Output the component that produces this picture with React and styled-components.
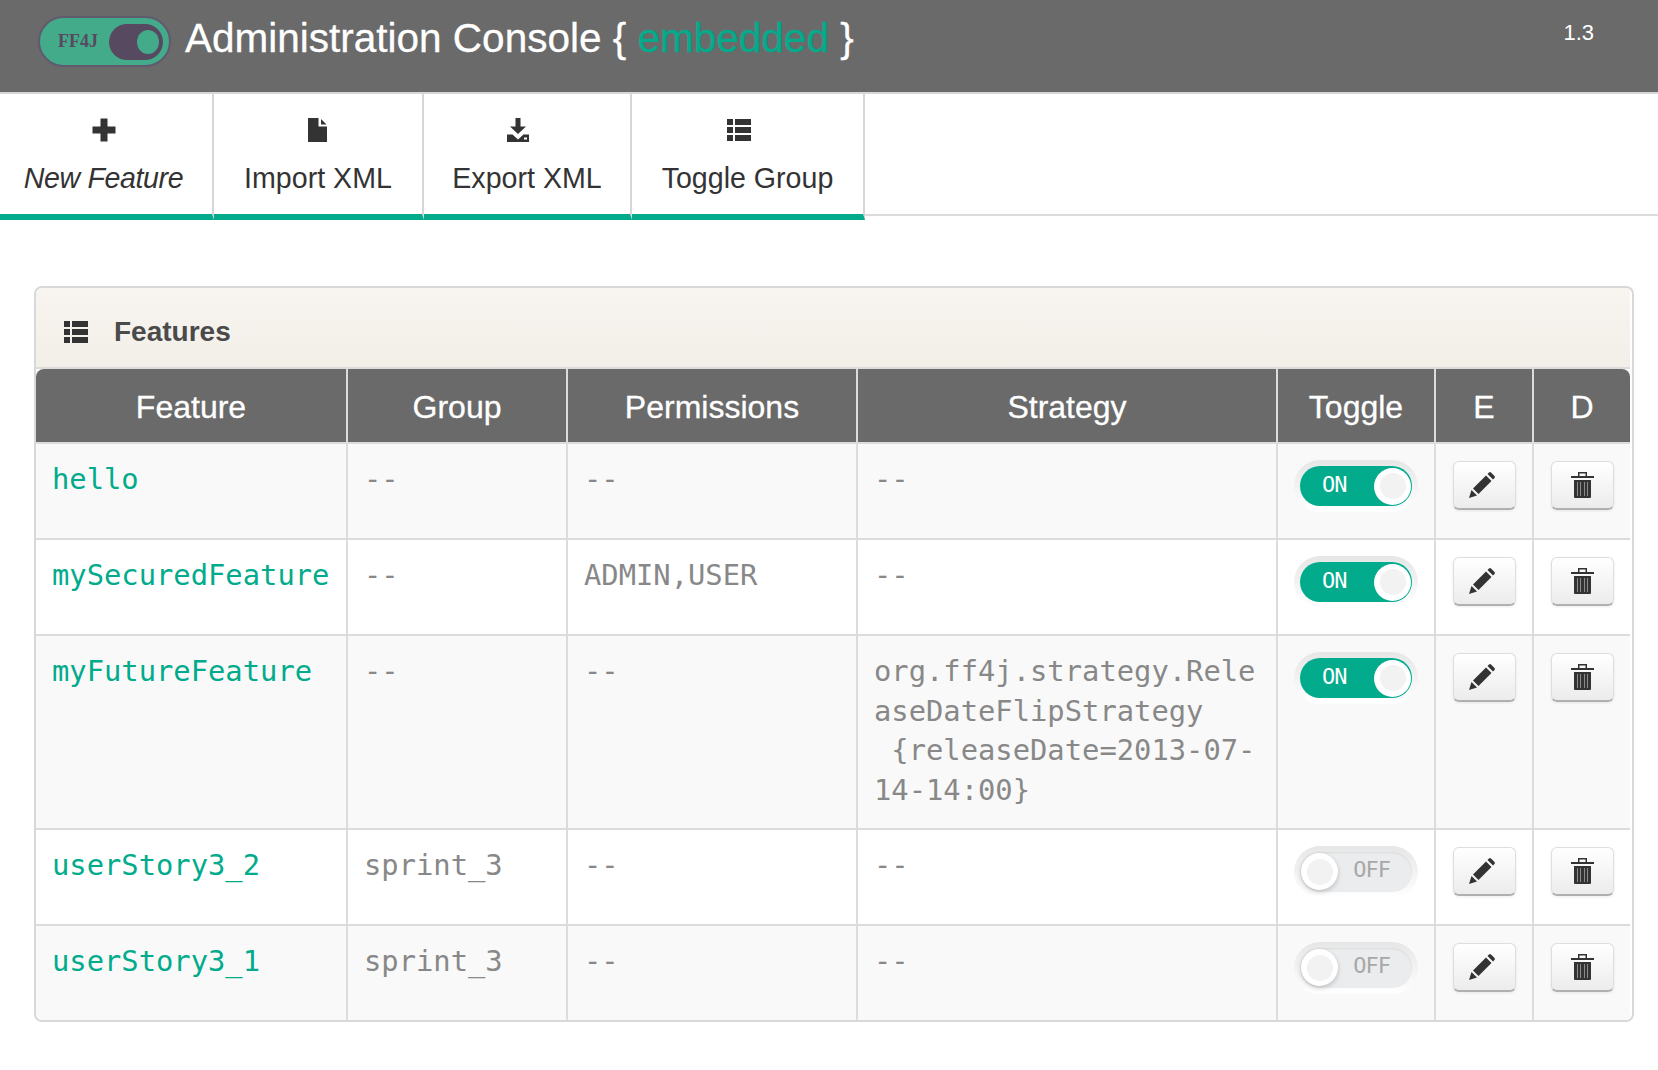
import React from 'react';
import styled, { createGlobalStyle } from 'styled-components';

const TEAL = '#01ab8b';

const GlobalStyle = createGlobalStyle`
  html, body {
    margin: 0;
    background: #fff;
    font-family: 'Liberation Sans', Arial, sans-serif;
  }
`;

/* Icons */
const IconSvg = styled.svg`
  display: block;
  fill: #333;
`;

const PencilSvg = styled(IconSvg)`
  margin-right: 4px;
`;

const PlusIcon = () => (
  <IconSvg width="24" height="24" viewBox="0 0 24 24">
    <path d="M8.500.5h7v8h8v7h-8v8h-7v-8h-8v-7h8z" />
  </IconSvg>
);

const FileIcon = () => (
  <IconSvg width="24" height="24" viewBox="0 0 24 24">
    <path d="M3 0h10.500v8.500H22V24H3z" />
    <path d="M16 1l5.500 5.500H16z" />
  </IconSvg>
);

const DownloadIcon = () => (
  <IconSvg width="24" height="24" viewBox="0 0 24 24">
    <path d="M9.500 0h5v8.500H20l-8 7.500-8-7.500h5.500z" />
    <path fillRule="evenodd" d="M1 24v-7.500h5.500l5.500 5 5.500-5H23V24zM18 19.500h3v2h-3z" />
  </IconSvg>
);

const ListIcon = () => (
  <IconSvg width="24" height="24" viewBox="0 0 24 24">
    <path d="M0 1h6v6H0zM8 1h16v6H8zM0 9h6v6H0zM8 9h16v6H8zM0 17h6v6H0zM8 17h16v6H8z" />
  </IconSvg>
);

const PencilIcon = () => (
  <PencilSvg width="26" height="26" viewBox="0 0 26 26">
    <path d="M0 26l2.500-8 5.500 5.500z" />
    <path d="M4 16.500L17 3.500l5.500 5.500-13 13z" />
    <path d="M18.500 2l1.500-1.500q1-.8 2 0l3.500 3.500q.8 1 0 2L24 7.500z" />
  </PencilSvg>
);

const TrashIcon = () => (
  <IconSvg width="23" height="26" viewBox="0 0 23 26">
    <path d="M0 4h7V0h9v4h7v2H0zM8.500 4h6V1.500h-6z" fillRule="evenodd" />
    <path d="M3 8h17v17q0 1-1 1H4q-1 0-1-1z" />
    <path d="M6.500 10v14M9.500 10v14M13.500 10v14M16.500 10v14" stroke="#8a8a8a" strokeWidth="1" fill="none" />
  </IconSvg>
);

/* Header */
const TopBar = styled.header`
  display: flex;
  align-items: flex-start;
  box-sizing: border-box;
  height: 94px;
  padding: 16px 64px 0 38px;
  background: #6a6a6a;
  border-bottom: 2px solid #d6d6d6;
`;

const Logo = styled.div`
  display: flex;
  align-items: center;
  justify-content: space-between;
  box-sizing: border-box;
  width: 133px;
  height: 51px;
  padding: 0 6px 0 18px;
  border: 2px solid #5f5a6e;
  border-radius: 26px;
  background: #43ab8a;
  font-family: 'Liberation Serif', serif;
  font-weight: 700;
  font-size: 18px;
  color: #574a60;
`;

const LogoTrack = styled.span`
  display: flex;
  align-items: center;
  justify-content: flex-end;
  box-sizing: border-box;
  width: 54px;
  height: 36px;
  padding-right: 4px;
  border-radius: 18px;
  background: #574a60;
`;

const LogoKnob = styled.span`
  width: 22px;
  height: 24px;
  border-radius: 50%;
  background: #43ab8a;
`;

const Title = styled.h1`
  margin: 1px 0 0 14px;
  font-size: 40.500px;
  line-height: 42px;
  font-weight: 400;
  color: #fff;
  -webkit-text-stroke: 0.3px;
`;

const Accent = styled.span`
  color: ${TEAL};
`;

const Version = styled.div`
  margin-left: auto;
  padding-top: 4px;
  font-size: 22px;
  line-height: 26px;
  color: #fff;
`;

/* Tabs */
const TabBar = styled.nav`
  display: flex;
  height: 122px;
  border-bottom: 2px solid #dcdcdc;
  box-sizing: border-box;
`;

const Tab = styled.a`
  display: flex;
  flex-direction: column;
  align-items: center;
  box-sizing: border-box;
  width: ${({ $width }) => $width}px;
  height: 126px;
  padding: 24px ${({ $italic }) => ($italic ? '5px' : '0')} 0 0;
  border-right: 2px solid #d6d6d6;
  border-bottom: 6px solid ${TEAL};
  font-size: 28.600px;
  font-style: ${({ $italic }) => ($italic ? 'italic' : 'normal')};
  letter-spacing: ${({ $italic }) => ($italic ? '-0.4px' : '0')};
  color: #333;
`;

const TabIcon = styled.span`
  margin-right: ${({ $shift }) => $shift || 0}px;
`;

const TabLabel = styled.span`
  margin-top: 18px;
  line-height: 36px;
`;

/* Panel */
const Panel = styled.section`
  margin: 70px 24px 0 34px;
  border: 2px solid #d8d8d8;
  border-radius: 8px;
  padding-right: 2px;
  overflow: hidden;
`;

const PanelHeading = styled.div`
  display: flex;
  align-items: center;
  gap: 26px;
  height: 71px;
  padding: 8px 0 0 28px;
  background: linear-gradient(#f8f5f0, #f2efe9);
  border-bottom: 2px solid #dcdcdc;
  font-size: 28px;
  font-weight: 700;
  color: #4a4a4a;
`;

const Table = styled.table`
  width: 1594px;
  table-layout: fixed;
  border-collapse: separate;
  border-spacing: 0;
`;

const Th = styled.th`
  height: 73px;
  padding: 3px 0 0;
  box-sizing: border-box;
  background: #6a6a6a;
  border-right: 2px solid #dcdcdc;
  font-size: 32px;
  font-weight: 400;
  color: #fff;
  -webkit-text-stroke: 0.3px;

  &:first-child {
    border-top-left-radius: 8px;
  }

  &:last-child {
    border-right: none;
    border-top-right-radius: 8px;
  }
`;

const Row = styled.tr`
  background: ${({ $odd }) => ($odd ? '#f9f9f9' : '#fff')};
`;

const Td = styled.td`
  padding: 16px 14px 17px 16px;
  vertical-align: top;
  border-top: 2px solid #dcdcdc;
  border-right: 2px solid #dcdcdc;
  font-family: 'DejaVu Sans Mono', monospace;
  font-size: 28.800px;
  line-height: 39.700px;
  color: #888;
  word-break: break-all;

  &:last-child {
    border-right: none;
  }
`;

const FeatureCell = styled(Td)`
  color: ${TEAL};
`;

const ControlCell = styled(Td)`
  padding: 16px 0 0;
  height: 96px;
  box-sizing: border-box;
`;

const Centered = styled.div`
  display: flex;
  justify-content: center;
`;

/* Toggle switch */
const SwitchHalo = styled.div`
  padding: 6px;
  border-radius: 26px;
  background: linear-gradient(#e6e6e6, #fff);
`;

const SwitchTrack = styled.div`
  display: flex;
  flex-direction: ${({ $on }) => ($on ? 'row' : 'row-reverse')};
  align-items: center;
  justify-content: space-between;
  box-sizing: border-box;
  width: 112px;
  height: 40px;
  padding: ${({ $on }) => ($on ? '0 1px 0 22px' : '0 22px 0 1px')};
  border-radius: 20px;
  background: ${({ $on }) => ($on ? TEAL : '#ebecee')};
  box-shadow: ${({ $on }) => ($on ? 'none' : 'inset 0 1px 2px rgba(0, 0, 0, 0.08)')};
  font-family: 'DejaVu Sans Mono', monospace;
  font-size: 22px;
  letter-spacing: -1px;
  color: ${({ $on }) => ($on ? '#fff' : '#a8a8a8')};
`;

const SwitchLabel = styled.span`
  margin-bottom: 3px;
`;

const SwitchKnob = styled.span`
  display: flex;
  align-items: center;
  justify-content: center;
  width: 37px;
  height: 37px;
  border-radius: 50%;
  background: #fff;
  box-shadow: ${({ $on }) => ($on ? 'none' : '0 2px 5px rgba(0, 0, 0, 0.2)')};

  &::after {
    content: '';
    width: 26px;
    height: 26px;
    border-radius: 50%;
    background: #f2f2f2;
  }
`;

const Toggle = ({ on }) => (
  <Centered>
    <SwitchHalo>
      <SwitchTrack $on={on}>
        <SwitchLabel>{on ? 'ON' : 'OFF'}</SwitchLabel>
        <SwitchKnob $on={on} />
      </SwitchTrack>
    </SwitchHalo>
  </Centered>
);

const ActionButton = styled.button`
  display: flex;
  align-items: center;
  justify-content: center;
  box-sizing: border-box;
  width: 63px;
  height: 49px;
  margin-top: 1px;
  padding: 0;
  background: linear-gradient(#fff, #ececec);
  border: 1px solid #dedede;
  border-bottom: 2px solid #b0b0b0;
  border-radius: 6px;
  box-shadow: 0 1px 3px rgba(0, 0, 0, 0.08);
`;

const tabs = [
  { label: 'New Feature', icon: <PlusIcon />, width: 214, italic: true },
  { label: 'Import XML', icon: <FileIcon />, width: 210, shift: 2 },
  { label: 'Export XML', icon: <DownloadIcon />, width: 208, shift: 18 },
  { label: 'Toggle Group', icon: <ListIcon />, width: 233, shift: 18 },
];

const columns = [
  { label: 'Feature', width: 312 },
  { label: 'Group', width: 220 },
  { label: 'Permissions', width: 290 },
  { label: 'Strategy', width: 420 },
  { label: 'Toggle', width: 158 },
  { label: 'E', width: 98 },
  { label: 'D', width: 96 },
];

const features = [
  { name: 'hello', group: '--', perms: '--', strategy: '--', on: true },
  { name: 'mySecuredFeature', group: '--', perms: 'ADMIN,USER', strategy: '--', on: true },
  {
    name: 'myFutureFeature',
    group: '--',
    perms: '--',
    strategy: (
      <>
        org.ff4j.strategy.ReleaseDateFlipStrategy
        <br />
        {'\u00a0{releaseDate=2013-07-14-14:00}'}
      </>
    ),
    on: true,
  },
  { name: 'userStory3_2', group: 'sprint_3', perms: '--', strategy: '--', on: false },
  { name: 'userStory3_1', group: 'sprint_3', perms: '--', strategy: '--', on: false },
];

const App = () => (
  <>
    <GlobalStyle />
    <TopBar>
      <Logo>
        FF4J
        <LogoTrack>
          <LogoKnob />
        </LogoTrack>
      </Logo>
      <Title>
        Administration Console {'{'} <Accent>embedded</Accent> {'}'}
      </Title>
      <Version>1.3</Version>
    </TopBar>

    <TabBar>
      {tabs.map((tab) => (
        <Tab key={tab.label} $width={tab.width} $italic={tab.italic}>
          <TabIcon $shift={tab.shift}>{tab.icon}</TabIcon>
          <TabLabel>{tab.label}</TabLabel>
        </Tab>
      ))}
    </TabBar>

    <Panel>
      <PanelHeading>
        <ListIcon />
        Features
      </PanelHeading>
      <Table>
        <colgroup>
          {columns.map((col) => (
            <col key={col.label} width={col.width} />
          ))}
        </colgroup>
        <thead>
          <tr>
            {columns.map((col) => (
              <Th key={col.label}>{col.label}</Th>
            ))}
          </tr>
        </thead>
        <tbody>
          {features.map((f, i) => (
            <Row key={f.name} $odd={i % 2 === 0}>
              <FeatureCell>{f.name}</FeatureCell>
              <Td>{f.group}</Td>
              <Td>{f.perms}</Td>
              <Td>{f.strategy}</Td>
              <ControlCell>
                <Toggle on={f.on} />
              </ControlCell>
              <ControlCell>
                <Centered>
                  <ActionButton>
                    <PencilIcon />
                  </ActionButton>
                </Centered>
              </ControlCell>
              <ControlCell>
                <Centered>
                  <ActionButton>
                    <TrashIcon />
                  </ActionButton>
                </Centered>
              </ControlCell>
            </Row>
          ))}
        </tbody>
      </Table>
    </Panel>
  </>
);

export default App;
